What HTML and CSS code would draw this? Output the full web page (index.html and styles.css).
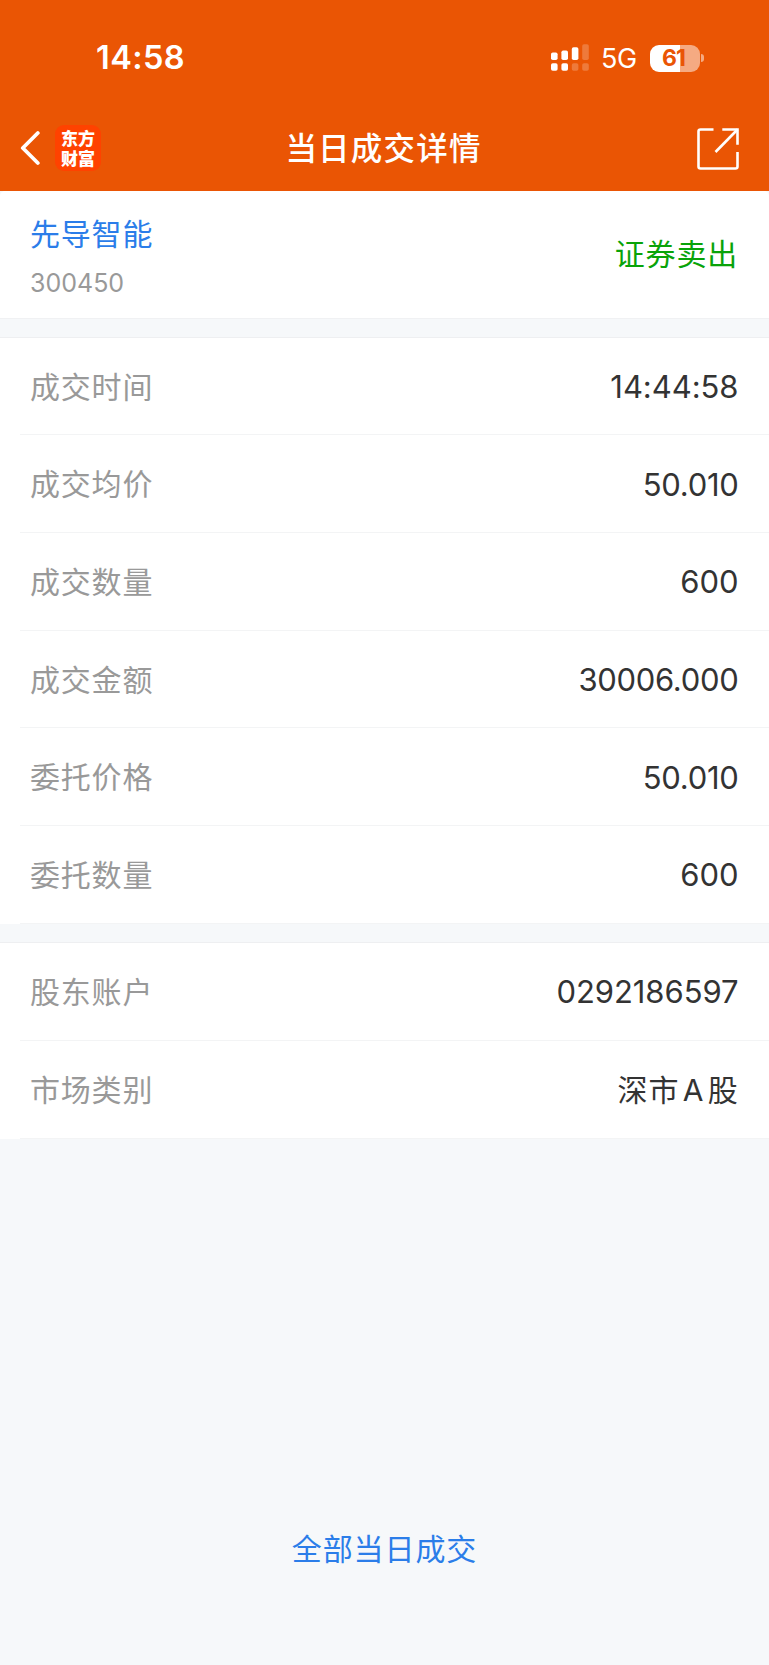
FILE: index.html
```html
<!DOCTYPE html>
<html lang="zh-CN">
<head>
    <meta charset="UTF-8">
    <title>当日成交详情</title>
    <link rel="stylesheet" href="styles.css">
</head>
<body>
    <header class="header">
        <div class="status-bar">
            <span class="clock">14:58</span>
            <div class="status-icons">
                <svg class="signal" width="38" height="28" viewBox="0 0 38 28" fill="#fff">
                    <rect x="0" y="8.5" width="6.6" height="7.5" rx="1.8"/>
                    <rect x="10.4" y="6.5" width="6.6" height="9.5" rx="1.8"/>
                    <rect x="20.8" y="3.3" width="6.6" height="12.7" rx="1.8"/>
                    <rect x="31.2" y="0.2" width="6.6" height="15.8" rx="1.8" opacity=".22"/>
                    <rect x="0" y="19.3" width="6.6" height="7.4" rx="1.8"/>
                    <rect x="10.4" y="19.3" width="6.6" height="7.4" rx="1.8"/>
                    <rect x="20.8" y="19.3" width="6.6" height="7.4" rx="1.8" opacity=".22"/>
                    <rect x="31.2" y="19.3" width="6.6" height="7.4" rx="1.8" opacity=".22"/>
                </svg>
                <span class="network">5G</span>
                <div class="battery">61</div>
                <span class="battery-tip"></span>
            </div>
        </div>
        <div class="nav-bar">
            <div class="nav-left">
                <svg width="20" height="36" viewBox="0 0 20 36" fill="none" stroke="#fff" stroke-width="3.8" stroke-linecap="round" stroke-linejoin="round">
                    <path d="M17.8 3 2.8 18l15 15"/>
                </svg>
                <div class="logo">东方<br>财富</div>
            </div>
            <h1 class="title">当日成交详情</h1>
            <svg class="share" width="42" height="42" viewBox="0 0 42 42" fill="none" stroke="#fff" stroke-width="2.6">
                <path d="M16.5 1.5H3.5q-2 0-2 2v35q0 2 2 2h35q2 0 2-2V24"/>
                <path d="M25.3 1.5h15.2v15.2"/>
                <path d="M40.5 1.5 18.5 24"/>
            </svg>
        </div>
    </header>

    <section class="stock">
        <div>
            <div class="stock-name">先导智能</div>
            <div class="stock-code">300450</div>
        </div>
        <div class="side">证券卖出</div>
    </section>

    <section class="list">
        <div class="row"><span class="label">成交时间</span><span class="value">14:44:58</span></div>
        <div class="row"><span class="label">成交均价</span><span class="value decimal">50.010</span></div>
        <div class="row"><span class="label">成交数量</span><span class="value">600</span></div>
        <div class="row"><span class="label">成交金额</span><span class="value decimal">30006.000</span></div>
        <div class="row"><span class="label">委托价格</span><span class="value decimal">50.010</span></div>
        <div class="row"><span class="label">委托数量</span><span class="value">600</span></div>
    </section>

    <section class="list account">
        <div class="row"><span class="label">股东账户</span><span class="value">0292186597</span></div>
        <div class="row"><span class="label">市场类别</span><span class="value market">深市<span class="latin">A</span>股</span></div>
    </section>

    <footer class="footer">
        <a class="all-link">全部当日成交</a>
    </footer>
</body>
</html>
```

FILE: styles.css
```css
* { box-sizing: border-box; }
body { margin: 0; min-height: 1665px; display: flex; flex-direction: column; background: #f6f8fa; color: #333; font-family: Inter, "Noto Sans CJK SC", sans-serif; }
svg { display: block; }

/* header */
.header { height: 191px; background: #ea5504; color: #fff; }
.status-bar { display: flex; justify-content: space-between; align-items: center; height: 107px; padding: 9px 65px 0 96px; }
.clock { font-size: 32.5px; font-weight: 600; line-height: 40px; letter-spacing: 0.4px; }
.status-icons { display: flex; align-items: center; }
.network { width: 36px; margin-left: 12px; padding-top: 2px; font-size: 27px; line-height: 30px; letter-spacing: -0.5px; white-space: nowrap; }
.battery { width: 50px; height: 27px; margin-left: 13px; padding-right: 3px; border-radius: 9px; background: linear-gradient(to right, #fff 61%, #f5aa82 61%); color: #ea5504; font-size: 23px; font-weight: 700; line-height: 26px; letter-spacing: -1px; text-align: center; }
.battery-tip { width: 3px; height: 8px; margin-left: 1px; border-radius: 0 4px 4px 0; background: #f5aa82; }
.nav-bar { display: flex; align-items: center; justify-content: space-between; height: 84px; padding: 0 30px 0 20px; }
.nav-left { display: flex; align-items: center; gap: 15px; width: 110px; padding-bottom: 2px; }
.logo { width: 46px; height: 46px; padding-top: 3px; border-radius: 9px; background: #ff4200; font-family: "Noto Sans CJK SC", sans-serif; font-size: 17px; font-weight: 900; line-height: 20px; text-align: center; }
.title { margin: 0; font-size: 31.5px; font-weight: 500; line-height: 44px; letter-spacing: 1.2px; }
.share { margin-left: 60px; }

/* stock */
.stock { display: flex; justify-content: space-between; align-items: center; height: 128px; padding: 0 31px 0 30px; border-bottom: 1px solid #f0f1f3; border-radius: 5px 5px 0 0; background: #fff; }
.stock-name { margin-top: 2px; color: #2b7de9; font-size: 30px; line-height: 44px; letter-spacing: 0.8px; }
.stock-code { margin-top: 10px; color: #999; font-size: 25px; line-height: 34px; }
.side { padding-bottom: 2px; color: #09a309; font-size: 30px; line-height: 44px; letter-spacing: 0.8px; }

/* detail rows */
.list { margin-top: 17.5px; border-top: 1px solid #eeeff1; background: #fff; }
.account { margin-top: 18.5px; }
.row { display: flex; justify-content: space-between; align-items: center; height: 97.7px; margin-left: 20px; padding: 0 30.5px 0 10px; border-bottom: 1px solid #f3f4f5; }
.label { padding-bottom: 2.5px; color: #999; font-size: 30px; letter-spacing: 0.8px; }
.value { padding-top: 1px; color: #333; font-size: 31px; letter-spacing: -0.05px; }
.decimal { letter-spacing: -0.3px; }
.market { padding: 0 0 2.5px; font-size: 30px; letter-spacing: 0.8px; }
.latin { margin: 0 3.5px; }

/* footer */
.footer { margin-top: auto; padding-bottom: 94px; text-align: center; }
.all-link { color: #2b7de9; font-size: 30px; line-height: 44px; letter-spacing: 0.9px; }
```
